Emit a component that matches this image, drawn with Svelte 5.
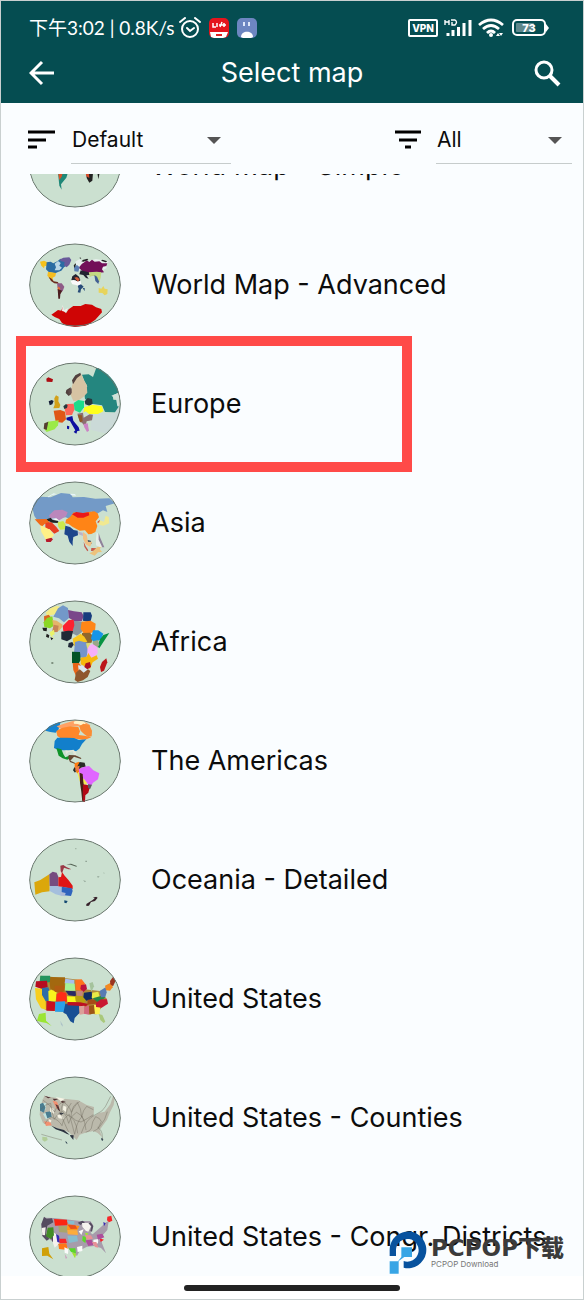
<script>
  let sort = 'Default';
  let filter = 'All';

  // Each map is drawn on a 276 x 250 globe, "x" and "y" is where its drawing starts.
  // Shapes are [fill, path].
  const maps = [
    {
      name: 'World Map - Simple', x: 59, y: 55,
      shapes: [
        ['#208878', 'M145 190h34l-8 25-16 20 2 16-7-12z'],
        ['#d8532a', 'M145 190h18l-6 22-7 10z'],
        ['#222', 'M230 190h22l-3 34-9 6-8-14zM264 200h7l-4 20z'],
        ['#d94c2a', 'M228 195l10 0 2 21-9-5z'],
        ['#c8f53a', 'M332 200l36 0-5 21-14 16-12-14z'],
      ],
    },
    {
      name: 'World Map - Advanced', x: 59, y: 37,
      shapes: [
        ['#f6c21c', 'M92 92l12-3 10 5-2 12-6-2-2 8-8-8z'],
        ['#2b6ca3', 'M112 94l12-2 8 5 12-6 10-8 12 6 8 14-10 6-8 10-10 4-8 4-20-4-8-8z'],
        ['#6a5a9a', 'M150 86l12-6 18-1 6 8-6 14-8 8-8-6 2-10-10-2z'],
        ['#b9d6e6', 'M136 98l10-8 8 6-4 8 8 6-8 8-14 0 4-9z'],
        ['#f5bd20', 'M116 122l24 4-2 10-8 4 2 10-10-6-8-10z'],
        ['#6b2b1e', 'M118 138l9 5 6 8 12 2 4 5-14-1-10-7z'],
        ['#8e5b87', 'M143 157l14 0 8 10-5 14-8 0-7-10z'],
        ['#e46a3a', 'M145 166l8 5-2 10-6-3z'],
        ['#4b1d20', 'M145 174l14 5-6 11-1 13-5 0z'],
        ['#e6efec', 'M198 92l12-7 10 4 8-6 8 7 24-6 22 4 16 3-8 14 2 6-16 9-10 8-24 5-26-10-14-12z'],
        ['#720f58', 'M208 110l10-12 4-2 10-8 8 5 8-7 8 6 14-1 8 6 16 0-3 8-10 2-3 8 6 9-16 2-6 8-20-2-16-6z'],
        ['#5b80b5', 'M194 107l9-5 8 7-4 13-12-1z'],
        ['#c3d982', 'M238 124l24-2 14 2-2 16-4 12-6-2-4-14-10-2-9 4z'],
        ['#405e93', 'M255 132l8 5 6 14-2 8-9-9z'],
        ['#232432', 'M214 118l24 6 2 8-9 1 7 10-8-2-8-9-12-2zM189 136l10-7 10 8 4 10-6 8-9-7-12-1z'],
        ['#fafafa', 'M184 151l8-4 12 4 10-1 2 11-7 8-8-7-12-2z'],
        ['#d45b38', 'M195 140l8-2 8 7-5 7z'],
        ['#284c78', 'M205 164l10-4 8 7-8 8-2 10-8-1 3-10zM220 171h6v10z'],
        ['#222', 'M212 78l4 6-5-2zM193 104l5-7 2 3-4 11zM234 83l-12 3-6 5 6 1 15-5zM280 86l14 5-5 3-14-5z'],
        ['#e7d45c', 'M268 171l8 2 6-8 4 8 9 2-1 14-8 4-7-7-11-1z'],
        ['#cf0505', 'M126 251l20-14 10 2 4-12 2 12 8 8 8-12 14-10 22 0 14-6 20 2 12 8 16 5 2 10-20 22-26 18-28 5-28-3-18-10-8-12-14-6z'],
        ['#f3eeee', 'M158 240l2-19 4 17 12-7-6 12z'],
      ],
    },
    {
      name: 'Europe', marked: true, x: 59, y: 36,
      shapes: [
        ['#cbdad8', 'M247 190l70-2 10-48 16 20-10 50-40 40-50-12z'],
        ['#24867f', 'M218 73l20-1 13 8 10-28 24 4 24 25 17 28 2 18-18 8 2 13 12 1 6 17-13 20-30-1-9-20-32-5-19-14-3-24 10-14-8-14z'],
        ['#cfe1d9', 'M306 136l15-6 6-3 12 44-15-3-4-23z'],
        ['#d6c3a3', 'M193 90l8-14 14-6 9 20 8 13 2 24-12 13-16 11-14 1-8-18 3-24z'],
        ['#51403e', 'M188 90l10-15 15-8 2 7-12 9-12 19zM171 119l13-8 2 20-8 6-9-9z'],
        ['#5e4a4a', 'M177 119l10-5 0 13-9 7z'],
        ['#ad0c12', 'M111 85l6-4 14 6-2 8-17-1z'],
        ['#d3a018', 'M135 144l5-9 8 4-1 14 6 11-3 9-18 1 4-11z'],
        ['#151f38', 'M118 153l9-4 6 3-4 10-8 3z'],
        ['#df5716', 'M133 181l20-2 14 5 3 23-11 10-20-3z'],
        ['#fc665a', 'M165 170l8-9 20-1 3 16-8 18-18 1z'],
        ['#28383d', 'M162 168l8-7 5 4-2 8-8 3zM226 153l9-10 13 3 2 14-10 6-12-4z'],
        ['#1ddc8b', 'M193 158l14-9 17 3 0 19-12 16-16-7z'],
        ['#ffff1d', 'M225 171l24-8 29 5 4 15-16 8-27 0-10-8-7 4z'],
        ['#0e109f', 'M171 202l18-5 3 14 16 20 3 10-7 1-3 8-8-5 5-5-8-14-8-14-10-3zM173 226l7 2-1 9-6-2z'],
        ['#8c6f71', 'M204 190l17-3 2 15 18-10 10 1-3 17-16 3-4 17-10-13-6-2z'],
        ['#925826', 'M205 194l13 1 2 18-8 3z'],
        ['#cb83c5', 'M222 221l13-2 4 22-6 4-8-14z'],
        ['#9bea48', 'M114 214l34-4-2 15-10 12-24 8-8-10z'],
        ['#563f32', 'M105 219l12-5-5 25-9-4z'],
      ],
    },
    {
      name: 'Asia', x: 59, y: 32,
      shapes: [
        ['#739ac7', 'M71 90l25-12 28 2 31-13 30 3 5 10 34-1 34 5 42-1 17 15-28 8 5 18-13-5-15 9-14 2-7-8-8 22-50 3-18-7-24 2-18 13-18-8-24 3-10-14-4-16z'],
        ['#e8f5f8', 'M115 78l18-10 10 3-15 2-10 7zM181 69l16 1 3 5-14-1z'],
        ['#bb87bc', 'M119 134l16-15 24-2 16 8-5 12-20 12-14-8-13 3z'],
        ['#f06b19', 'M76 146l38-1 7 12-14 2-10 9z'],
        ['#e73f23', 'M108 157l18-3 15 15 9 12-15 8-15-14-12 1z'],
        ['#1c2424', 'M112 146l13-5 5 7 16 2 2 7-18-1-13-5z'],
        ['#fafafa', 'M124 144l17-1 8 7-12-2z'],
        ['#fff087', 'M93 164l17 7 12 6 12 17-10 10-12 9-9-18-7-11z'],
        ['#b7192c', 'M109 206l17-5 5 5-7 8-13 0z'],
        ['#cbe94c', 'M145 155l17-4 7 11-2 14-14 1-6-9z'],
        ['#ff8416', 'M170 147l13-9 10-13 23 4 17-4 22-3 10 6 4 12-10 12 5 14-6 18-12 6-9 1-10-12-16 1-22-12-11-8-10-2z'],
        ['#eb1818', 'M188 131l13-7 20 3 17-2 2 9-18 7-17 0z'],
        ['#1c458b', 'M168 165l14 4 11 9 12 2 1 14-14 5-2 14 0 13-10-13-5-18-10-4z'],
        ['#bdb1c8', 'M206 183l14 3 1 10-13-5z'],
        ['#243c55', 'M234 208l10 2 3 9-11 2z'],
        ['#f1c084', 'M221 184l11 8 4 21 13 0-7 15-13-7-8-17z'],
        ['#c7594b', 'M223 213l6 14 8 12-3 3-9-14zM246 232l26 1-12 7-15 1z'],
        ['#edc27b', 'M240 248l16 7 10-10 12-1-7-9 8-10-16 5-15 14z'],
        ['#f1e990', 'M270 149l14 4 5-18 9 4 2 19-18 7-14-3z'],
        ['#cf4228', 'M263 155l9-8-3 9z'],
        ['#e7eee9', 'M262 184l6 8 1 13 5 14 5 8-6 3-13-6 0-20z'],
        ['#8f829a', 'M268 187l5 15 12 28-6 0-11-23z'],
      ],
    },
    {
      name: 'Africa', x: 59, y: 391,
      shapes: [
        ['#f4eb83', 'M109 428l16-14 17-6 9 2-8 21-29 7z'],
        ['#7398c9', 'M132 440l14-25 15-9 15 8 3 30-15 13-15-12z'],
        ['#d96820', 'M104 439l14-5 7 8-5 9-15 7z'],
        ['#8bd725', 'M103 457l10-13 16-5 5 28-12 8-17-4z'],
        ['#7a478a', 'M176 420l18 4 23 3 6 11-5 15-20 2-19-11z'],
        ['#183c7d', 'M222 427l22 0 4 10-5 20-22-5z'],
        ['#e4b46a', 'M129 450l13 2 18 12-3 9-9 10-15-6z'],
        ['#c78255', 'M133 464l15 3-3 19-17 1z'],
        ['#88959e', 'M190 452l30 3-2 31-15 11-16-8 3-18z'],
        ['#fb2330', 'M160 468l18-18 15-1 2 17-6 20-13 4-14-7z'],
        ['#ff8618', 'M217 455l27-3 15 9-2 23-14 6-21-1-8-13z'],
        ['#222936', 'M156 485l21-3 14 1-5 23-13 8-17-6z'],
        ['#202020', 'M99 473l14 0-1 11-10-2zM112 491l8 5-2 8-8-4zM123 502l9 3-6 6z'],
        ['#e9f36a', 'M121 487l13-8 2 14-8 4 9 10-13-9z'],
        ['#90672d', 'M218 489l24-1 11 12-7 19-21-1-7-14z'],
        ['#f9c71f', 'M190 506l24-15 11 9 9 15-26 6-14 8z'],
        ['#1695e7', 'M251 481l16 0 15 10-7 17-20 10-10-12z'],
        ['#089342', 'M272 508l10-13 18-6-14 21-16 25-6-6z'],
        ['#99a787', 'M250 514l16-4 4 14-6 9-13-4z'],
        ['#202938', 'M178 519l11-3 4 8-7 10-10-3z'],
        ['#7394cb', 'M197 516l12-4 27 7-1 28-5 19-17-4-4-14-15 0z'],
        ['#f6aff8', 'M235 529l15-7 14 9 1 19-14 13-17-6z'],
        ['#dfda71', 'M230 520l15-2-11 19z'],
        ['#005427', 'M188 545l24 1 2 24-7 12-19-3z'],
        ['#f7b70c', 'M214 563l18-3 5-11 9 14 16-7 4 10-16 11-8 19-28-13z'],
        ['#e76418', 'M190 579l19 0 7 10-6 19-9 12-9-20z'],
        ['#d9e7ee', 'M206 586l15 2 15 11-13 12-14-4z'],
        ['#ad0f1f', 'M229 580l13-4 3 15-11 7-9-7z'],
        ['#8f572e', 'M200 608l11-10 12 10 13-10 7 5-8 18-14 10-16 5-9-6z'],
        ['#bb161a', 'M278 576l13-11 3 12-10 25-9 4-3-15z'],
        ['#676', 'M126 577h6v4h-6z'],
      ],
    },
    {
      name: 'The Americas', x: 59, y: 27,
      shapes: [
        ['#1583d0', 'M108 61l15-19 31-7-7 25-8 7-16-2z'],
        ['#ffa164', 'M142 48l26-9 20-6 15-3 28 7 12 8-7 10-13 0-15-7-21 0-16 5-20 1z'],
        ['#fff2c7', 'M193 34l12-4 14 1 10 8-6 9-18-7-11-1z'],
        ['#ff872a', 'M141 62l16-9 27-5 23 2 5 13-4 11 18 2 20 5-15 6-12 1-20-3-18 1-27-2-10-7z'],
        ['#fa8c35', 'M210 48l12-8 18 4 8 17-1 17-11 2-12-9-10-10z'],
        ['#127fcb', 'M136 92l8-10 28 0 22 1 15 6 22-2-13 14-8 14-10 8-15-3-13 0-24 0-14-7z'],
        ['#109329', 'M141 113l15 4 7 16 5 8 12-5 4 7-10 5-14-4-12-8z'],
        ['#e3e8d8', 'M168 120l9 1 15-3 8 7 3 18-8-6-5-14-13 2-6 8z'],
        ['#654731', 'M178 134l20 1 18 8-1 3-21-7-11 12 15 7 2 4-18-7-5-12z'],
        ['#ff7c11', 'M196 159l13-5 7 12-4 15-8 9-8-14z'],
        ['#282b25', 'M211 155l15 2 3 12-15 3-3 8-10-6zM195 171l9 6-7 10-6-7z'],
        ['#ee7d42', 'M198 169l13-3-3 14-10 2z'],
        ['#f3ea53', 'M204 188l10-4 6 16 14 18-5 5-18-10z'],
        ['#e066ff', 'M208 176l17-7 14-2 13 13 18 9-4 18-15 10-7 12-9-9-10-13-14-9z'],
        ['#472018', 'M211 187l9 4 2 23 4 25-2 32-5 4-3-30-4-28z'],
        ['#b20714', 'M221 222l14 2 6 8-4 15-9 8-1 20-7 1z'],
        ['#5b5860', 'M236 222l12 1-6 14-6-5z'],
      ],
    },
    {
      name: 'Oceania - Detailed', x: 59, y: 385,
      shapes: [
        ['#e3dfd0', 'M150 489l5-17 6-2 4 6-4 14-12 12z'],
        ['#dba70b', 'M75 517l18-7 27-17 1 51-23 3-20 7z'],
        ['#764c80', 'M120 493l10-8 12 3 5 12 0 28-26 0z'],
        ['#a5bfdd', 'M122 528l34 0 3 30-20-5-18-10z'],
        ['#df1515', 'M147 502l8-1 3-15 8 11 12 14 12 16 0 10-32-7-11-1z'],
        ['#3064bd', 'M157 530l31 5 2 8-5 15-28-3z'],
        ['#adb9d6', 'M153 545l16 4-3 10-12-3z'],
        ['#9b3846', 'M153 467l9-2 9 6 15 7-8 0-14-5-3 9-3 8-4-6z'],
        ['#526052', 'M171 463l14-2 18 7-2 2-17-6z'],
        ['#124771', 'M165 571l10 2-4 7-6-2z'],
        ['#36212a', 'M231 582l20-13 9-9 5 3-8 10-12 3-6 11-8 1zM250 562l9-1 0 4z'],
        ['#92a597', 'M198 414h3v4h-3zM228 452h5v4h-5zM221 511l9 2-3 4zM263 499l8 0-5 5zM281 488h4v3z'],
      ],
    },
    {
      name: 'United States', x: 59, y: 21,
      shapes: [
        ['#b08a3a', 'M93 76l77 8 45 5 12 28 44 5 22 24-12 20-20 26-48-4-22 10-24-12-60-8-14-30z'],
        ['#24945e', 'M93 76l29 0 5 19-24 2-12-5z'],
        ['#b60c20', 'M80 93l33-2 2 19-17 6-20-7z'],
        ['#f7ce1d', 'M77 113l21 2 2 20 9 17 1 26-15-4-15-27z'],
        ['#2d6ea8', 'M98 113l19-2 5 16 2 29-15-4-11-18z'],
        ['#a3680f', 'M123 80l24 1 20 0-1 26-20 3-10 12-13-7-2-17z'],
        ['#f9f41d', 'M117 122l9-4 16 7-3 28-21-1z'],
        ['#b35c12', 'M136 106l30 0 3 17-20 4-13-3z'],
        ['#ff2b17', 'M142 131l12-7 17 3 2 27-33 1z'],
        ['#c90f21', 'M112 151l26 5-2 26-25-1z'],
        ['#2aa0ea', 'M138 154l29-1 0 32-30-1z'],
        ['#a9c1ed', 'M168 85l27 4 0 14-29-4z'],
        ['#a6f299', 'M168 98l28 2 2 21-32 0z'],
        ['#2a2a65', 'M168 121l31 2 1 15-22-3z'],
        ['#f8f91b', 'M173 138l30 1 4 17-33 0z'],
        ['#bba10f', 'M197 136l22 2 10 10-6 14-18-1-6-9z'],
        ['#ff711f', 'M198 88l19-1 11 14-12 8 3 13-20-3z'],
        ['#bd123d', 'M215 104l15-2 3 14-12 10-8-11z'],
        ['#c48679', 'M201 122l20-1-2 16-16-1z'],
        ['#184f94', 'M168 160l40 0 3 27-15 16-3 16-10-6-12-21-9-5z'],
        ['#bd1022', 'M175 155l38 1 24 5-7 7-56-3z'],
        ['#dc9f99', 'M209 168l16-2 3 24-17 3z'],
        ['#d2677b', 'M225 170l15-5-1 28-15-3z'],
        ['#9d5516', 'M239 166l16-2 2 24-17 5z'],
        ['#fff050', 'M254 163l19 4-2 25-14 0z'],
        ['#a5c39c', 'M240 99l10-4 4 13-8 17-3-11z'],
        ['#112d60', 'M224 127l23-3 2 23-18 4-9-10z'],
        ['#e9eb47', 'M249 127l18-3 4 16-15 8-9-6z'],
        ['#a64b17', 'M235 148l21-1 13-8 3 20-38 4z'],
        ['#278946', 'M250 144l22-6 10-6 5 11-22 13z'],
        ['#c91731', 'M260 158l15-11 18 0 3 13-19 12-17-2z'],
        ['#577bb3', 'M271 122l18-11 3 15-4 14-13 1z'],
        ['#f28922', 'M287 106l20-10 3 15-8 10-12-1z'],
        ['#9b3420', 'M302 92l9-12 8 11-8 17-8-6z'],
        ['#a9c87b', 'M268 191l11 3 9 20-5 4-10-9z'],
        ['#9be532', 'M89 191l20-4 1 24 17 16-16-9-16-3-12-4z'],
        ['#adc2c7', 'M153 211l7 12 1 6-6-6z'],
      ],
    },
    {
      name: 'United States - Counties', x: 59, y: 379,
      shapes: [
        ['#bbb9ab', 'M105 437l36 7 66 7 25 14 22 6-1 28 16-10 17-4 17-22 8-24 5 3-3 23-11 22-9 22-13 18-9 13 7 21-13-12-13-6-24 5-17 6-9 16-9-9-14-14-24-9-30-10-24-9-10-25 2-25z'],
        ['#bfe2df', 'M96 461l14-3-2 22-13 7zM101 492l18-7 8 13-17 10z'],
        ['#4a7d91', 'M92 462l9-4 7 14-4 16-12-6zM108 487l16-3 3 16-13 5z'],
        ['#f28f70', 'M104 514l19 2 4 10-17 2zM130 452l13 3 7 18-8 4z'],
        ['#503033', 'M105 437l20 6-9 2zM130 446l17 1-12 5zM138 462l9 5 6 18-7-6zM154 451l16 5-12 3z'],
        ['#f5f3e5', 'M123 472l10 4 1 15-12-6zM139 441l28 5-12 8zM142 493l18 4 3 10-15-2zM162 467l9 3-1 16-9-7zM115 505l12 7-5 6z'],
        ['#2d3440', 'M149 488l15 1-9 6zM126 527l18 8 20 5 17 14-8-2-13-7-21-7zM182 555l11 1-1 14-9-11z'],
        ['#b1cd98', 'M99 560l14 2 2 8-9 5-7-5z'],
        ['#334655', 'M168 573l4 3 3 5-5-1zM276 563l6 4-2 6-4-3z'],
      ],
      lines: 'M100 450q20 10 36 36q6-20 25-31q20 12 25 32q4-20 18-30q12 18 13 44q4-22 15-32l20 10M94 478q14-16 30-18q2 26 11 48q8-18 25-24q14 14 18 36q8-24 24-33q18 8 24 27M106 522q8-16 21-20q22 8 31 25q4-24 22-34q10 36 16 60q6-38 22-53q10 16 12 40M165 453q-14 24-8 43q4 16 21 50M186 459q-16 20-16 34q30 8 35 57M211 454q-26 22-26 45q14 16 30 17q20-10 37-22M216 549q14-42 42-55q24-10 30-24l16-31M229 547q14-4 17-12q2-22 13-35q14 4 17 15l-10 20M251 545q18-8 23-19q14-16 20-41M96 553l42 12 20 5M265 532q12 8 13 18l2 19',
    },
    {
      name: 'United States - Congr. Districts', x: 59, y: 48,
      shapes: [
        ['#a79cab', 'M96 134l10-19 28 1 80 9 29 0 9 13-8 23 6 4 29-26 11-10 8-3-4 26-18 20 2 20 12 30-15-16-20-6-22 2-21 11-9 17-16-13-14-15-28-6-25-16-20-9z'],
        ['#554c60', 'M96 134l8-22 8 6 16-1 4 12-18 10-4 24 10 16-8 5-13-14zM124 174l8-12 6 14 4 18-12-6zM205 130l14-6 8 5-14 8zM234 134l10-5 8 12-4 16-5-2 3-14z'],
        ['#f5f2ee', 'M97 146l12-2-2 24-8-1zM131 158l16 11 5 21-16 15-5-14zM218 131l19 0 8 10-8 16-8-3-10-12z'],
        ['#438c27', 'M115 145l17-1 2 24-10 11-14-8z'],
        ['#fb2412', 'M134 119l39 2 2 17-38 1z'],
        ['#a9a66a', 'M147 140l26 0 1 20-25-2z'],
        ['#ff9519', 'M174 135l36 5-6 13-31 0z'],
        ['#e9511b', 'M175 136l23 2 6 10-20 1z'],
        ['#fcac3b', 'M174 152l30 1 2 14-31-2z'],
        ['#86bdcd', 'M174 169l29 0 3 17-27 5zM173 124l22 1 0 10-17-2z'],
        ['#3529b4', 'M140 164l9 5 3 21-8-2zM282 128l7 4-5 9z'],
        ['#f72629', 'M150 178l19 0 4 13-22 1zM271 177l13 4-10 7zM294 112l12-3 3 15-10 5-6-6z'],
        ['#ff7616', 'M147 193l24-1 5 20-27-3z'],
        ['#5ad829', 'M178 207l20 0 2 15-15-4zM220 170l12 3-4 18-9-7z'],
        ['#a0e52f', 'M187 219l14 4-4 14zM227 160l10 2-6 10z'],
        ['#fafafa', 'M165 204l12 5-1 15-10-4zM203 203l16-4 0 16-14 3zM252 181l15-2-1 13-14 4zM208 156l15-6-7 17z'],
        ['#ad4d9b', 'M228 183l19-2 5 16-15 3zM262 166l17-3 6 11-19 7z'],
        ['#e79196', 'M227 168l18 0 6 10-19 3zM248 188l13 0 6 17-10-2z'],
        ['#d0a008', 'M98 207l19-4 3 20 12 17-18-11-16 1z'],
        ['#ca9fbd', 'M166 223l8 13-5 2z'],
      ],
    },
  ];
</script>

<svelte:head>
  <title>Select map</title>
</svelte:head>

<div class="screen">
  <header>
    <div class="status">
      <span class="clock">下午3:02 | 0.8K/s</span>
      <svg class="alarm" width="22" height="22" viewBox="0 0 22 22">
        <g fill="none" stroke="#fff" stroke-width="2" stroke-linecap="round">
          <circle cx="11" cy="12" r="8" />
          <path d="M1 5l5-4M21 5l-5-4M8 11l3 3 4-3" />
        </g>
      </svg>
      <svg class="app" width="20" height="20" viewBox="0 0 20 20">
        <rect width="20" height="20" rx="5" fill="#e4151d" />
        <path d="M1 14h18l-2 5-3 1H5l-3-1z" fill="#fff" />
        <path d="M4 5v4h3M8 5v4M10 7h7M13 4l-2 5M15 5v4" fill="none" stroke="#fff" stroke-width="1.5" />
        <path d="M7 17h6" stroke="#d22" stroke-width="2" />
      </svg>
      <svg class="app" width="20" height="20" viewBox="0 0 20 20">
        <rect width="20" height="20" rx="5" fill="#6d86c1" />
        <path d="M7 4v4M12 4v4" stroke="#dfe8fa" stroke-width="2" />
        <path d="M4 19c0-7 12-7 12 0l-2 1H6z" fill="#fff" />
      </svg>
      <span class="vpn">VPN</span>
      <svg width="28" height="20" viewBox="0 0 28 20">
        <g fill="none" stroke="#fff">
          <path d="M1 2v5M5 2v5M1 4h4M7 2h4q3 2 0 5H8V4" stroke-width="1.4" />
          <path d="M4 15v3M9 12v6M14.500 9v9M20 5v13M26 2v16" stroke-width="3" />
        </g>
      </svg>
      <svg class="wifi" width="26" height="20" viewBox="0 0 26 20">
        <g fill="none" stroke="#fff" stroke-width="2.800">
          <path d="M1 7q12-10 24 0M5 11q8-7 16 0M9 15q4-4 8 0" />
        </g>
        <circle cx="13" cy="17" r="2" fill="#fff" />
        <path d="M18 18l2-3 2 3zM21 15l4 0-2 3z" fill="#fff" />
      </svg>
      <svg class="battery" width="37" height="18" viewBox="0 0 37 18">
        <rect x="1" y="1" width="32" height="15" rx="4" fill="none" stroke="#fff" stroke-width="2" />
        <rect x="4" y="4" width="18" height="9" rx="1" fill="#5f888c" />
        <path d="M34 5l3 4-3 4z" fill="#fff" />
        <text x="17" y="13" text-anchor="middle">73</text>
      </svg>
    </div>
    <div class="bar">
      <button class="back" aria-label="Back">
        <svg width="26" height="26" viewBox="0 0 26 26">
          <path d="M25 13H3M13 2L2 13l11 11" fill="none" stroke="#fff" stroke-width="3" />
        </svg>
      </button>
      <h1>Select map</h1>
      <button class="search" aria-label="Search">
        <svg width="28" height="28" viewBox="0 0 28 28">
          <g fill="none" stroke="#fff" stroke-width="3">
            <circle cx="11" cy="11" r="8" />
            <path d="M17 17l9 9" stroke-width="4" />
          </g>
        </svg>
      </button>
    </div>
  </header>

  <div class="controls">
    <svg width="28" height="20" viewBox="0 0 28 20">
      <path d="M0 2h27M0 10h18M0 17h9" stroke="#000" stroke-width="3" />
    </svg>
    <div class="select sort">
      <select aria-label="Sort" bind:value={sort}>
        <option>Default</option>
        <option>Name</option>
      </select>
      <svg width="14" height="7" viewBox="0 0 14 7"><path d="M0 0h14L7 7z" fill="#555" /></svg>
    </div>
    <svg width="26" height="20" viewBox="0 0 26 20">
      <path d="M0 2h26M4 10h18M10 17h6" stroke="#000" stroke-width="3" />
    </svg>
    <div class="select filter">
      <select aria-label="Filter" bind:value={filter}>
        <option>All</option>
        <option>Countries</option>
      </select>
      <svg width="14" height="7" viewBox="0 0 14 7"><path d="M0 0h14L7 7z" fill="#555" /></svg>
    </div>
  </div>

  <main>
    <ul>
      {#each maps as map}
        <li class:marked={map.marked}>
          <button class="map">
            <svg class="globe" viewBox="0 0 276 250">
              <ellipse cx="138" cy="125" rx="136" ry="123" fill="#cbe0d0" />
              <g transform="translate({-map.x} {-map.y})">
                {#each map.shapes as [fill, d]}
                  <path {d} {fill} />
                {/each}
                {#if map.lines}
                  <path d={map.lines} fill="none" stroke="#6b6458" stroke-width="2" opacity="0.6" />
                {/if}
              </g>
              <ellipse cx="138" cy="125" rx="136" ry="123" fill="none" stroke="#68756c" stroke-width="3" />
            </svg>
            <span>{map.name}</span>
          </button>
        </li>
      {/each}
    </ul>
  </main>

  <footer><div class="home"></div></footer>

  <div class="watermark">
    <svg width="38" height="43" viewBox="0 0 114 129">
      <path d="M2 75V55a55 55 0 1 1 42 55V90a34 34 0 1 0-23-35v20z" fill="#07529e" />
      <path d="M37 49h32v29H46L29 90v38H2V91h25l10-13z" fill="#38a5e5" />
    </svg>
    <div>
      <div class="brand">PCPOP下载</div>
      <div class="tagline">PCPOP Download</div>
    </div>
  </div>
</div>

<style>
  :global(body) {
    margin: 0;
    background: #fafdff;
  }
  .screen {
    position: relative;
    display: flex;
    flex-direction: column;
    box-sizing: border-box;
    height: 100vh;
    border: 1px solid #c9d0d0;
    color: #0c0c0c;
    font-family: Inter, "Noto Sans CJK SC", sans-serif;
  }
  svg {
    display: block;
    flex: none;
  }
  button {
    padding: 0;
    border: 0;
    background: none;
    color: inherit;
    font: inherit;
    cursor: pointer;
  }
  header {
    padding: 12px 22px 0;
    background: #054d51;
    color: #fff;
  }
  .status {
    display: flex;
    align-items: center;
    height: 30px;
    padding: 0 12px 0 6px;
  }
  .clock {
    font: 19px/30px Lato, "Noto Sans CJK SC", sans-serif;
    white-space: nowrap;
  }
  .alarm {
    margin-left: 4px;
  }
  .app {
    margin-left: 8px;
  }
  .vpn {
    margin: 0 6px 0 auto;
    padding: 0 2px;
    border: 2px solid #fff;
    border-radius: 2px;
    font-size: 10px;
    line-height: 14px;
    font-weight: 800;
  }
  .wifi {
    margin: 0 8px 0 6px;
  }
  .battery text {
    fill: #fff;
    font-size: 11px;
    font-weight: 800;
  }
  .bar {
    display: grid;
    grid-template-columns: 1fr auto 1fr;
    align-items: center;
    height: 60px;
  }
  .back {
    justify-self: start;
    margin-left: 6px;
  }
  .search {
    justify-self: end;
  }
  h1 {
    margin: 0;
    font-size: 27px;
    line-height: 32px;
    font-weight: 400;
  }
  .controls {
    display: flex;
    align-items: center;
    box-sizing: border-box;
    height: 71px;
    padding: 3px 11px 0 27px;
  }
  .select {
    position: relative;
    height: 46px;
    border-bottom: 1px solid #c6cccc;
  }
  .sort {
    width: 160px;
    margin: 0 auto 0 15px;
  }
  .filter {
    width: 136px;
    margin-left: 15px;
  }
  select {
    width: 100%;
    height: 46px;
    padding: 0 30px 0 1px;
    border: 0;
    background: none;
    color: inherit;
    font: 21px/46px Inter, sans-serif;
    appearance: none;
  }
  .select svg {
    position: absolute;
    top: 20px;
    right: 10px;
    pointer-events: none;
  }
  main {
    flex: 1;
    min-height: 0;
    overflow: hidden;
  }
  ul {
    margin: -68px 0 0;
    padding: 0;
    list-style: none;
  }
  li {
    position: relative;
  }
  .marked::after {
    content: '';
    position: absolute;
    top: -8px;
    left: 15px;
    box-sizing: border-box;
    width: 68%;
    height: 136px;
    border: 10px solid #ff4a48;
    pointer-events: none;
  }
  .map {
    display: flex;
    align-items: center;
    gap: 30px;
    width: 100%;
    height: 119px;
    padding-left: 28px;
    font-size: 27px;
    line-height: 32px;
    text-align: left;
    white-space: nowrap;
  }
  .globe {
    width: 92px;
    height: 84px;
    border-radius: 50%;
    overflow: hidden;
  }
  footer {
    display: flex;
    align-items: center;
    justify-content: center;
    height: 23px;
    background: #fff;
  }
  .home {
    width: 37%;
    height: 6px;
    border-radius: 3px;
    background: #222;
  }
  .watermark {
    position: absolute;
    right: 19px;
    bottom: 25px;
    display: flex;
    align-items: center;
    gap: 4px;
  }
  .brand {
    color: #3b3b3b;
    font: 900 23px/22px "DejaVu Sans", "Noto Sans CJK SC", sans-serif;
  }
  .tagline {
    color: #777;
    font-size: 8px;
    line-height: 10px;
  }
</style>
